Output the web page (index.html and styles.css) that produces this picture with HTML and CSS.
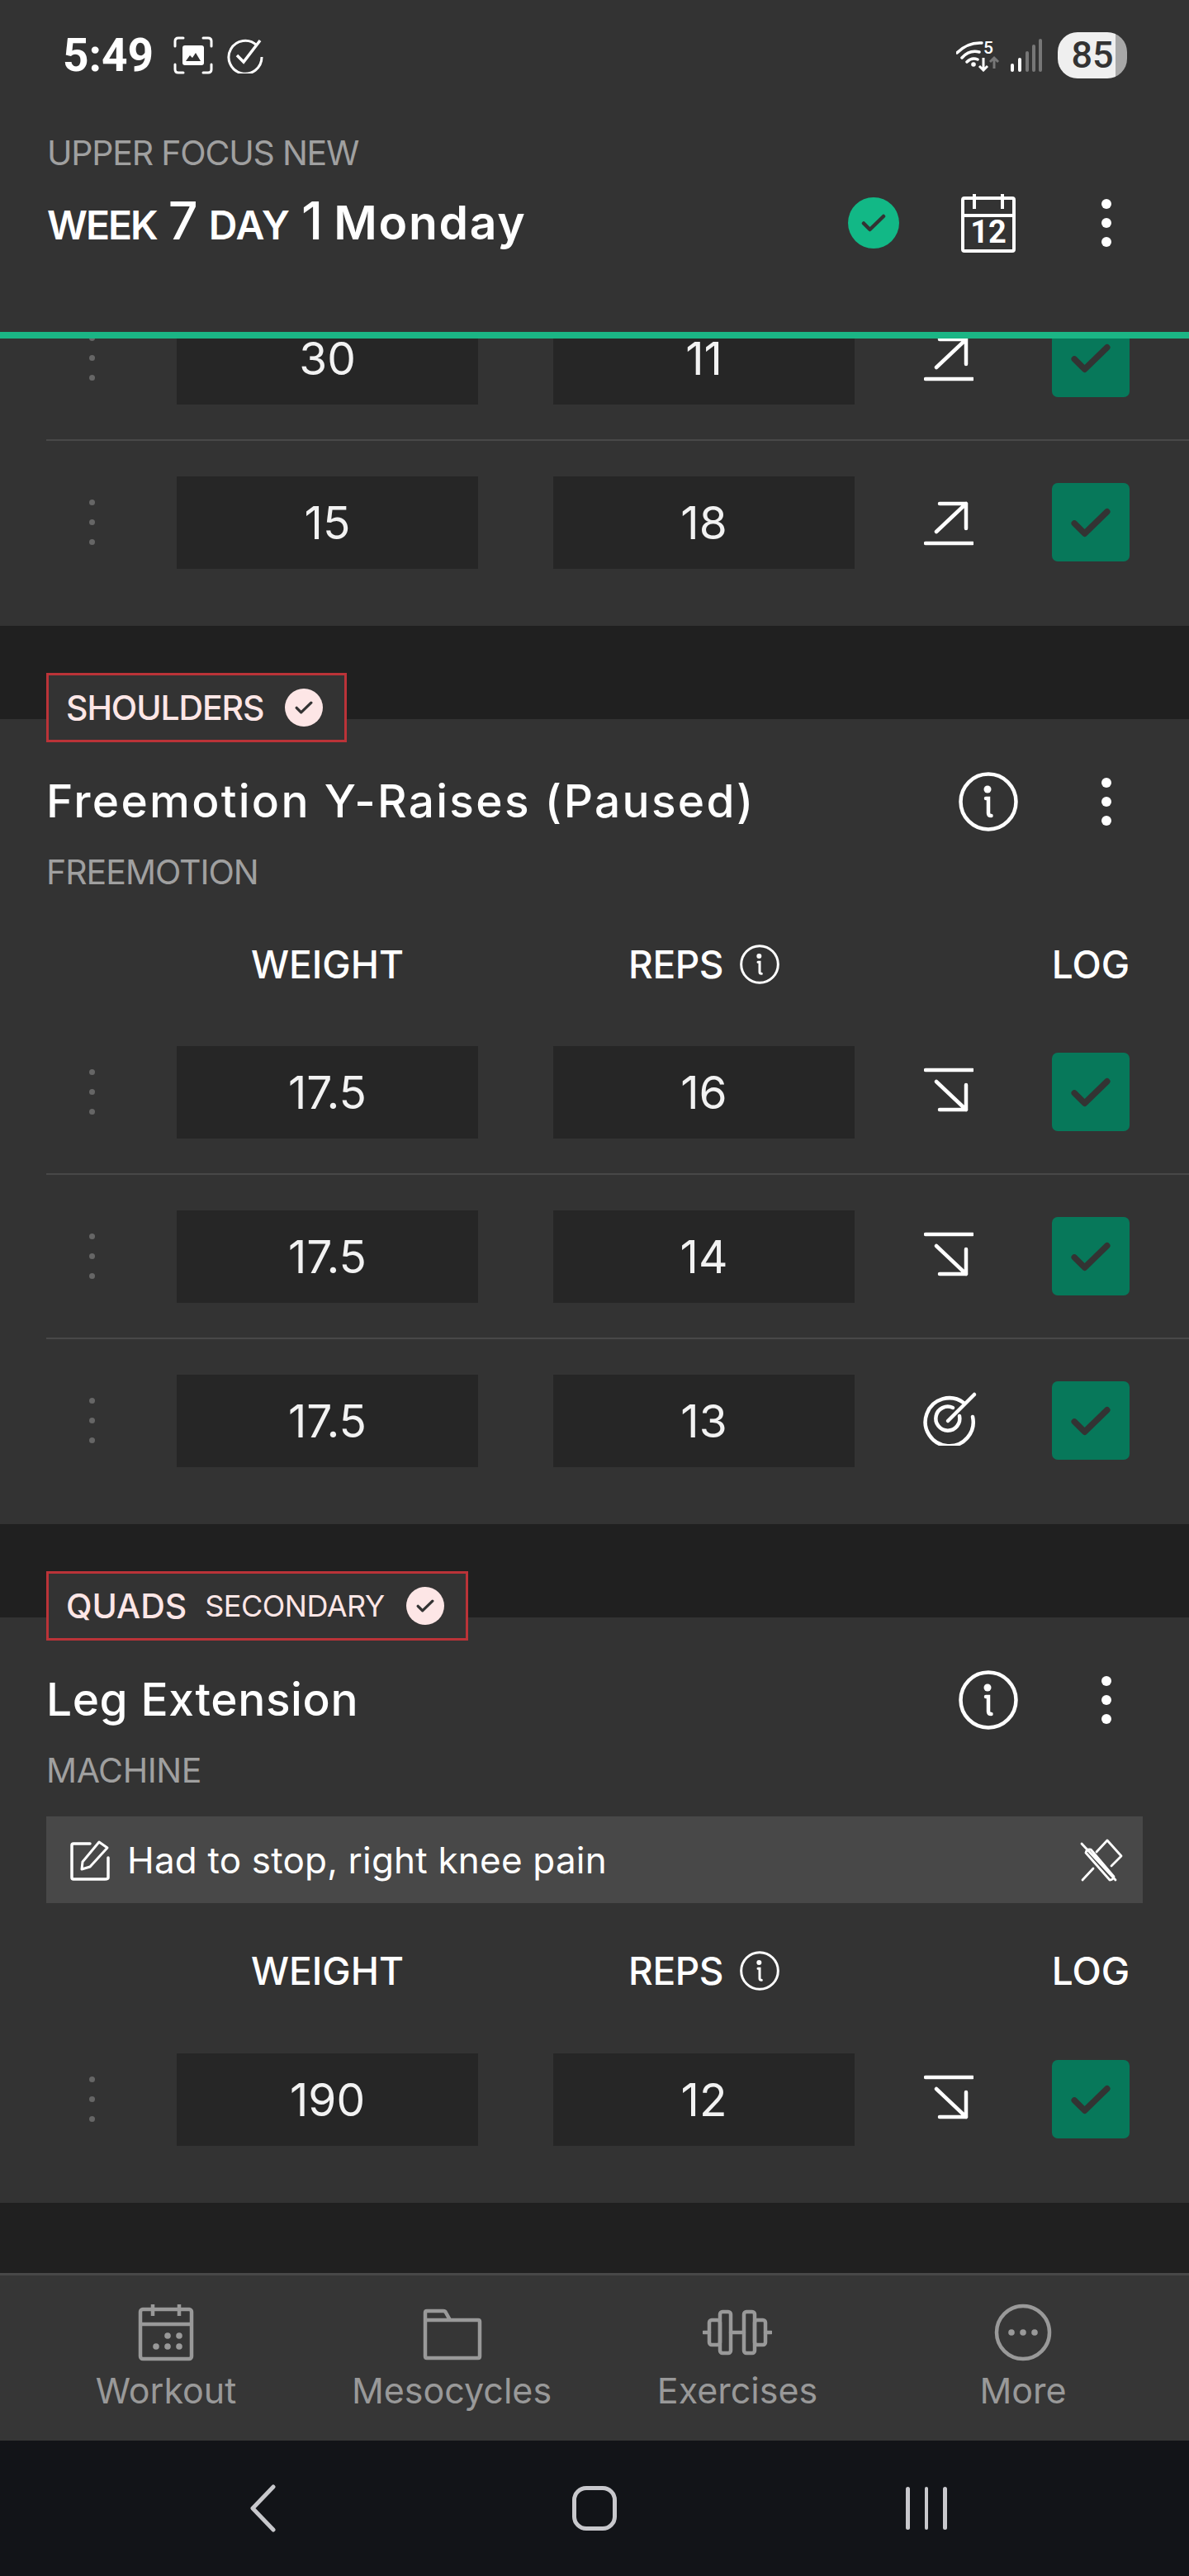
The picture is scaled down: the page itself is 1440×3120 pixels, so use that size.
FILE: index.html
```html
<!DOCTYPE html>
<html lang="en">
<head>
<meta charset="utf-8">
<title>Workout</title>
<link rel="stylesheet" href="styles.css">
</head>
<body>
<svg class="defs" width="0" height="0" aria-hidden="true">
  <symbol id="kebab" viewBox="0 0 12 58"><circle cx="6" cy="6" r="6"/><circle cx="6" cy="29" r="6"/><circle cx="6" cy="52" r="6"/></symbol>
  <symbol id="info" viewBox="0 0 72 72"><circle cx="36" cy="36" r="33.5" fill="none" stroke="currentColor" stroke-width="4.5"/><circle cx="35" cy="21" r="4.5" fill="currentColor"/><path d="M33 32h3v18q0 3 3.5 3" fill="none" stroke="currentColor" stroke-width="4.5" stroke-linecap="round"/></symbol>
  <symbol id="check" viewBox="0 0 60 46"><path d="M6 24 L21 39 L54 7" fill="none" stroke="currentColor" stroke-width="9" stroke-linecap="round" stroke-linejoin="round"/></symbol>
  <symbol id="down" viewBox="0 0 60 54"><path d="M2 3H59M15 17L51 51M51 21V51H19" fill="none" stroke="currentColor" stroke-width="4.5" stroke-linecap="round" stroke-linejoin="round"/></symbol>
  <symbol id="up" viewBox="0 0 60 54"><path d="M2 51H59M15 37L51 3M51 33V3H19" fill="none" stroke="currentColor" stroke-width="4.5" stroke-linecap="round" stroke-linejoin="round"/></symbol>
  <symbol id="target" viewBox="0 0 66 66"><path d="M49 14A29 29 0 1 0 60 31" fill="none" stroke="currentColor" stroke-width="4.5" stroke-linecap="round"/><path d="M44 30A14.500 14.500 0 1 1 36 20" fill="none" stroke="currentColor" stroke-width="4.500" stroke-linecap="round"/><path d="M30 36L62 4" fill="none" stroke="currentColor" stroke-width="4.5" stroke-linecap="round"/></symbol>
</svg>

<div class="app">
  <header class="header">
    <div class="status">
      <span class="time">5:49</span>
      <svg class="st-shot" viewBox="0 0 48 46"><path d="M2 12V6q0-4 4-4h6M36 2h6q4 0 4 4v6M46 34v6q0 4-4 4h-6M12 44H6q-4 0-4-4v-6" fill="none" stroke="#fff" stroke-width="3" stroke-linecap="round"/><rect x="11" y="11" width="26" height="24" rx="3" fill="#fff"/><path d="M15 30l5-7 3 3 4-6 6 10z" fill="#333"/></svg>
      <svg class="st-check" viewBox="0 0 44 44"><path d="M36 10A20 20 0 1 0 42 24" fill="none" stroke="#fff" stroke-width="3"/><path d="M12 22l8 8L40 4" fill="none" stroke="#fff" stroke-width="3.500"/></svg>
      <span class="status-gap"></span>
      <span class="wifi">
        <svg class="wifi-svg" viewBox="0 0 53 38"><path d="M1 15Q14 2 31 3M7 21Q16 11 28 14M13 26Q19 20 26 23" fill="none" stroke="#fff" stroke-width="3.500" stroke-linecap="round"/><circle cx="21" cy="29" r="2.800" fill="#fff"/><path d="M33 21V36M28 31l5 5 5-5" fill="none" stroke="#fff" stroke-width="3"/><path d="M46 34V21M41 26l5-5 5 5" fill="none" stroke="#777" stroke-width="3"/></svg>
        <span class="wifi-5">5</span>
      </span>
      <svg class="signal" viewBox="0 0 38 40"><g stroke-width="4" stroke-linecap="round"><path d="M2 38V32M11 38V25" stroke="#fff"/><path d="M20 38V17M28 38V9M36 38V2" stroke="#777"/></g></svg>
      <span class="battery"><span class="battery-num">85</span></span>
    </div>
    <div class="meso">UPPER FOCUS NEW</div>
    <div class="title-row">
      <div class="week"><span class="w-small w-week">WEEK</span><span class="w-num">7</span><span class="w-small">DAY</span><span class="w-num">1</span><span class="w-day">Monday</span></div>
      <span class="done"><svg class="done-check" viewBox="0 0 60 46"><use href="#check"/></svg></span>
      <svg class="cal" viewBox="0 0 66 72"><path d="M4 6H62Q64 6 64 8V68Q64 70 62 70H4Q2 70 2 68V8Q2 6 4 6ZM2 27H64M16 1V19M50 1V19" fill="none" stroke="#fff" stroke-width="4"/><text class="cal-num" x="33" y="60" text-anchor="middle">12</text></svg>
      <svg class="kebab"><use href="#kebab"/></svg>
    </div>
  </header>
  <div class="progress"></div>

  <main class="scroll">
    <section class="card card-first">
      <div class="row">
        <span class="drag"><i></i><i></i><i></i></span><span class="val">30</span><span class="val val-b">11</span>
        <svg class="trend trend-up"><use href="#up"/></svg>
        <span class="log"><svg class="log-check"><use href="#check"/></svg></span>
      </div>
      <div class="row">
        <span class="drag"><i></i><i></i><i></i></span><span class="val">15</span><span class="val val-b">18</span>
        <svg class="trend trend-up"><use href="#up"/></svg>
        <span class="log"><svg class="log-check"><use href="#check"/></svg></span>
      </div>
    </section>

    <section class="card">
      <div class="tag"><span class="tag-main tag-tight">SHOULDERS</span><span class="tag-check"><svg class="tag-tick"><use href="#check"/></svg></span></div>
      <div class="ex-row">
        <h2 class="ex-name ex-wide">Freemotion Y-Raises (Paused)</h2>
        <svg class="info-big"><use href="#info"/></svg>
        <svg class="kebab"><use href="#kebab"/></svg>
      </div>
      <div class="ex-sub ex-sub-tight">FREEMOTION</div>
      <div class="thead">
        <span class="th th-w">WEIGHT</span>
        <span class="th th-r"><span class="th-text">REPS</span><svg class="info-small"><use href="#info"/></svg></span>
        <span class="th th-l">LOG</span>
      </div>
      <div class="row">
        <span class="drag"><i></i><i></i><i></i></span><span class="val">17.5</span><span class="val val-b">16</span>
        <svg class="trend"><use href="#down"/></svg>
        <span class="log"><svg class="log-check"><use href="#check"/></svg></span>
      </div>
      <div class="row">
        <span class="drag"><i></i><i></i><i></i></span><span class="val">17.5</span><span class="val val-b">14</span>
        <svg class="trend"><use href="#down"/></svg>
        <span class="log"><svg class="log-check"><use href="#check"/></svg></span>
      </div>
      <div class="row">
        <span class="drag"><i></i><i></i><i></i></span><span class="val">17.5</span><span class="val val-b">13</span>
        <svg class="trend trend-target"><use href="#target"/></svg>
        <span class="log"><svg class="log-check"><use href="#check"/></svg></span>
      </div>
    </section>

    <section class="card">
      <div class="tag"><span class="tag-main">QUADS</span><span class="tag-sec">SECONDARY</span><span class="tag-check"><svg class="tag-tick"><use href="#check"/></svg></span></div>
      <div class="ex-row">
        <h2 class="ex-name">Leg Extension</h2>
        <svg class="info-big"><use href="#info"/></svg>
        <svg class="kebab"><use href="#kebab"/></svg>
      </div>
      <div class="ex-sub">MACHINE</div>
      <div class="note">
        <svg class="note-edit" viewBox="0 0 48 50"><path d="M24 5H4Q2 5 2 7V46Q2 48 4 48H42Q46 48 46 46V22" fill="none" stroke="#fff" stroke-width="3.500" stroke-linecap="round"/><path d="M14 36L15 27 35 3 45 10 24 33Z" fill="none" stroke="#fff" stroke-width="3" stroke-linejoin="round"/></svg>
        <span class="note-text">Had to stop, right knee pain</span>
        <svg class="note-pin" viewBox="0 0 52 52"><path d="M2 6L43 50M7 17L36 50Q40 50 41 46L13 13Q8 12 7 17ZM20 16L33 2 50 21 38 33M3 50L16 36" fill="none" stroke="#fff" stroke-width="2.800" stroke-linecap="round" stroke-linejoin="round"/></svg>
      </div>
      <div class="thead thead-3">
        <span class="th th-w">WEIGHT</span>
        <span class="th th-r"><span class="th-text">REPS</span><svg class="info-small"><use href="#info"/></svg></span>
        <span class="th th-l">LOG</span>
      </div>
      <div class="row">
        <span class="drag"><i></i><i></i><i></i></span><span class="val">190</span><span class="val val-b">12</span>
        <svg class="trend"><use href="#down"/></svg>
        <span class="log"><svg class="log-check"><use href="#check"/></svg></span>
      </div>
    </section>
  </main>

  <nav class="tabs">
    <div class="tab">
      <svg class="tab-ic" viewBox="0 0 84 70"><g fill="none" stroke="#999" stroke-width="4.500"><rect x="11" y="7" width="62" height="60" rx="3"/><path d="M11 25H73M26 1V15M58 1V15"/></g><g fill="#999"><circle cx="44" cy="39" r="3.800"/><circle cx="58" cy="39" r="3.800"/><circle cx="30" cy="52" r="3.800"/><circle cx="44" cy="52" r="3.800"/><circle cx="58" cy="52" r="3.800"/></g></svg>
      <span class="tab-label">Workout</span>
    </div>
    <div class="tab">
      <svg class="tab-ic" viewBox="0 0 84 70"><path d="M10 11Q10 9 12 9H32Q34 9 35 11L40 20H74Q76 20 76 22V64Q76 66 74 66H12Q10 66 10 64ZM10 20H40" fill="none" stroke="#999" stroke-width="4.500" stroke-linejoin="round"/></svg>
      <span class="tab-label">Mesocycles</span>
    </div>
    <div class="tab">
      <svg class="tab-ic" viewBox="0 0 84 70"><g fill="none" stroke="#999" stroke-width="4.500" stroke-linejoin="round"><rect x="21" y="10" width="13" height="50" rx="3"/><rect x="50" y="10" width="13" height="50" rx="3"/><rect x="8" y="20" width="13" height="30" rx="3"/><rect x="63" y="20" width="13" height="30" rx="3"/><path d="M34 35H50M1 35H8M76 35H83" stroke-linecap="round"/></g></svg>
      <span class="tab-label">Exercises</span>
    </div>
    <div class="tab">
      <svg class="tab-ic" viewBox="0 0 84 70"><circle cx="42" cy="35" r="32" fill="none" stroke="#999" stroke-width="4.500"/><g fill="#999"><circle cx="28" cy="35" r="3.800"/><circle cx="42" cy="35" r="3.800"/><circle cx="56" cy="35" r="3.800"/></g></svg>
      <span class="tab-label">More</span>
    </div>
  </nav>

  <footer class="sysnav">
    <svg class="sys-back" viewBox="0 0 34 58"><path d="M30 3L5 29 30 55" fill="none" stroke="#c8c8cc" stroke-width="5" stroke-linecap="round" stroke-linejoin="round"/></svg>
    <span class="sys-home"></span>
    <span class="sys-recent"><i></i><i></i><i></i></span>
  </footer>
</div>
</body>
</html>
```
FILE: styles.css
```css
* { box-sizing: border-box; }
html, body { margin: 0; padding: 0; }
body { background: #202020; font-family: Inter, "Liberation Sans", sans-serif; color: #fff; }
.defs { position: absolute; }
.app { width: 1440px; height: 3120px; display: flex; flex-direction: column; overflow: hidden; }

/* header */
.header { height: 402px; background: #333; padding: 39px 94px 0 56px; display: flex; flex-direction: column; flex: none; }
.status { height: 56px; display: flex; align-items: center; padding-left: 20px; margin-right: -19px; }
.time { font-family: Roboto, sans-serif; font-weight: 700; font-size: 55px; line-height: 56px; width: 134px; }
.st-shot { width: 48px; height: 46px; margin-right: 17px; }
.st-check { width: 44px; height: 44px; }
.status-gap { flex: 1; }
.wifi { position: relative; width: 53px; height: 38px; margin-right: 13px; margin-top: 2px; }
.wifi-svg { display: block; width: 53px; height: 38px; }
.wifi-5 { position: absolute; left: 33px; top: -3px; font-family: Roboto, sans-serif; font-weight: 500; font-size: 21px; line-height: 24px; color: #fff; }
.signal { width: 38px; height: 40px; margin-right: 19px; }
.battery { width: 84px; height: 56px; border-radius: 24px; background: linear-gradient(90deg, #efefef 0 83%, #a8a8a8 83%); display: flex; align-items: center; justify-content: center; }
.battery-num { font-family: Roboto, sans-serif; font-weight: 500; font-size: 45px; line-height: 56px; color: #333; }

.meso { margin-top: 65px; font-size: 41px; line-height: 50px; color: #a0a0a0; font-weight: 400; letter-spacing: -1.2px; padding-left: 1px; }
.title-row { margin-top: 25px; height: 70px; display: flex; align-items: center; }
.week { flex: 1; display: flex; align-items: baseline; line-height: 70px; padding-left: 1px; }
.w-small { font-size: 48px; font-weight: 600; }
.w-week { letter-spacing: -2px; }
.w-num { font-size: 63px; font-weight: 500; margin: 0 13px 0 14px; }
.w-day { font-size: 57px; font-weight: 600; letter-spacing: 1.7px; }
.done { width: 62px; height: 62px; border-radius: 50%; background: #12b886; display: flex; align-items: center; justify-content: center; color: #333; margin-right: 75px; }
.done-check { width: 30px; height: 24px; }
.cal { width: 66px; height: 72px; margin-right: 104px; }
.cal-num { font-family: Roboto, sans-serif; font-weight: 700; font-size: 38px; fill: #fff; }
.kebab { width: 12px; height: 58px; fill: #fff; flex: none; }

.progress { height: 8px; flex: none; background: #1bb585; }

/* scrolled list */
.scroll { flex: 1; min-height: 0; overflow: hidden; background: #202020; }
.card { background: #333; margin-bottom: 113px; padding-bottom: 27px; }
.card-first { margin-top: -77px; }
.card:last-child { margin-bottom: 0; }

.tag { display: inline-flex; align-items: center; height: 84px; margin: -56px 0 0 56px; padding: 0 26px 0 21px; background: #333; border: 3.500px solid #bb3338; color: #fde6e6; vertical-align: top; }
.tag-main { font-size: 41px; font-weight: 500; line-height: 50px; }
.tag-tight { letter-spacing: -1.1px; }
.tag-sec { font-size: 36px; font-weight: 400; line-height: 50px; margin-left: 22px; letter-spacing: -0.5px; }
.tag-check { width: 46px; height: 46px; border-radius: 50%; background: #fde6e6; margin-left: 26px; display: flex; align-items: center; justify-content: center; color: #333; }
.tag-tick { width: 22px; height: 18px; }

.ex-row { display: flex; align-items: center; height: 71px; margin-top: 36px; padding: 0 94px 0 56px; }
.ex-name { flex: 1; margin: 0; font-size: 55px; font-weight: 500; line-height: 71px; letter-spacing: 0.6px; }
.ex-wide { letter-spacing: 2.3px; }
.info-big { width: 72px; height: 72px; color: #fff; margin-right: 101px; }
.ex-sub { margin: 25px 0 0 56px; font-size: 41px; line-height: 50px; color: #a0a0a0; letter-spacing: -0.4px; }
.ex-sub-tight { letter-spacing: -1px; }

.thead, .row { display: grid; grid-template-columns: 158px 365px 91px 365px 239px 94px; margin-left: 56px; }
.thead { height: 48px; margin-top: 63px; margin-bottom: 30px; align-items: center; }
.thead-3 { margin-top: 58px; margin-bottom: 31px; }
.th { font-size: 46px; font-weight: 500; line-height: 48px; display: flex; align-items: center; justify-content: center; }
.th-text { letter-spacing: -0.5px; }
.th-w { grid-column: 2; }
.th-r { grid-column: 4; }
.th-l { grid-column: 6; }
.info-small { width: 48px; height: 48px; color: #fff; margin-left: 20px; }

.row { height: 199px; align-items: center; border-top: 2.500px solid #484848; }
.thead + .row, .card-first .row:first-child { border-top-color: transparent; }
.drag { display: flex; flex-direction: column; gap: 17px; width: 7px; margin-left: 52px; }
.drag i { display: block; width: 7px; height: 7px; border-radius: 50%; background: #666; }
.val { grid-column: 2; height: 112px; background: #262626; display: flex; align-items: center; justify-content: center; font-size: 55px; line-height: 112px; color: #f2f2f2; }
.val-b { grid-column: 4; }
.trend { grid-column: 5; width: 60px; height: 54px; color: #fff; margin: 0 0 6px 84px; }
.trend-up { margin: 3px 0 0 84px; }
.trend-target { width: 66px; height: 66px; margin: 0 0 6px 83px; }
.log { grid-column: 6; width: 94px; height: 95px; border-radius: 7px; background: #07785a; color: #333; display: flex; align-items: center; justify-content: center; }
.log-check { width: 50px; height: 38px; }

.note { display: flex; align-items: center; height: 105px; margin: 31px 56px 0; background: #484848; padding: 0 24px 0 29px; }
.note-edit { width: 48px; height: 50px; margin-right: 21px; }
.note-text { flex: 1; font-size: 44px; line-height: 50px; color: #fff; letter-spacing: 0.2px; }
.note-pin { width: 52px; height: 52px; }

/* tabs */
.tabs { height: 203px; flex: none; background: #363636; border-top: 3px solid #484848; padding: 0 28px; display: grid; grid-template-columns: repeat(4, 1fr); }
.tab { display: flex; flex-direction: column; align-items: center; padding-top: 34px; }
.tab-ic { width: 84px; height: 70px; }
.tab-label { margin-top: 10px; font-size: 43px; line-height: 50px; color: #999; }

.sysnav { height: 164px; flex: none; background: #121418; display: grid; grid-template-columns: 1fr 1fr 1fr; align-items: center; justify-items: center; padding: 0 117px; }
.sys-back { width: 34px; height: 58px; }
.sys-home { width: 54px; height: 54px; border: 5px solid #c8c8cc; border-radius: 17px; }
.sys-recent { display: flex; gap: 18px; }
.sys-recent i { display: block; width: 4.500px; height: 52px; border-radius: 3px; background: #c8c8cc; }
```
